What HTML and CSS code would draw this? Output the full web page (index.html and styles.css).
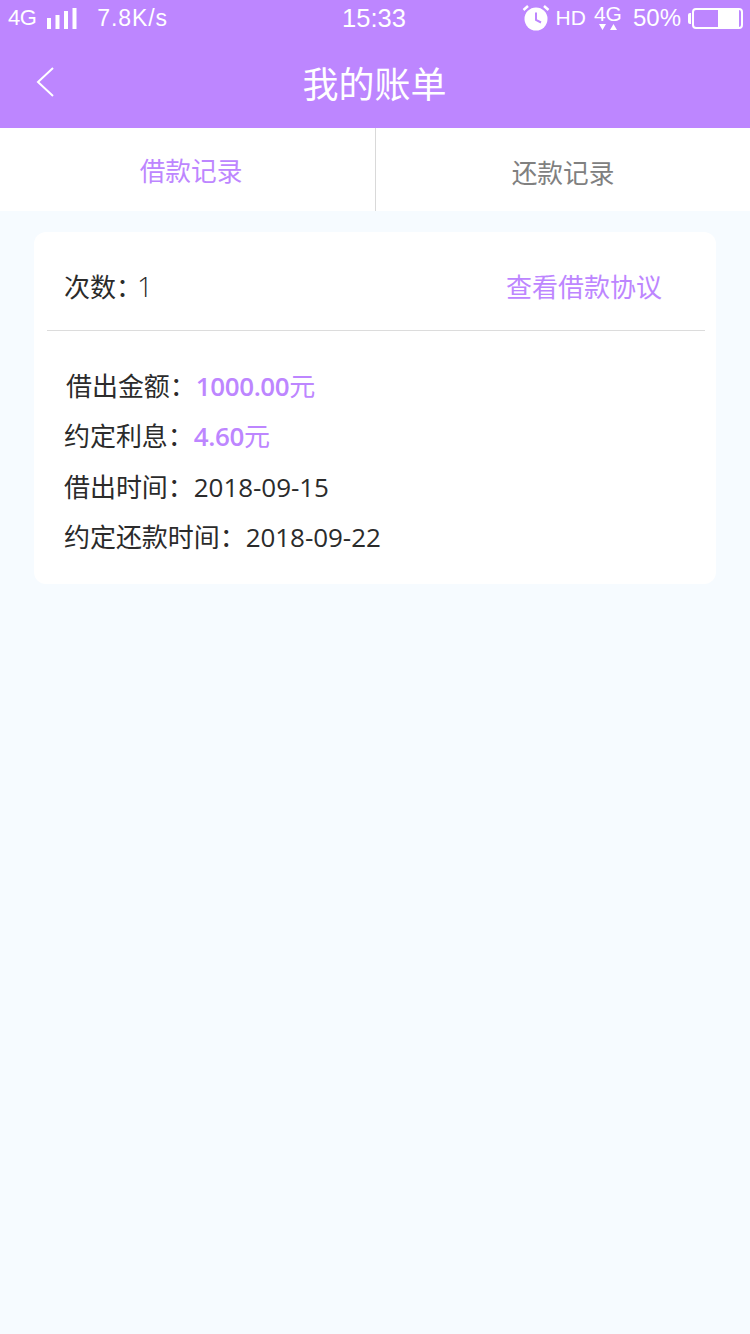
FILE: index.html
```html
<!DOCTYPE html>
<html lang="zh-CN">
<head>
  <meta charset="UTF-8" />
  <meta name="viewport" content="width=device-width, initial-scale=1.0"/>
  <title>我的账单</title>
  <link rel="stylesheet" href="styles.css">
</head>
<body>
  <div class="top">
    <div class="status-bar">
      <div class="status-left">
        <span class="net">4G</span>
        <svg class="signal" width="30" height="21" viewBox="0 0 30 21"><path fill="#fff" d="M0 10h4v11H0zM8.500 7h4v14h-4zM17 3h4v18h-4zM25.500 0h4v21h-4z"/></svg>
        <span class="speed">7.8K/s</span>
      </div>
      <span class="clock">15:33</span>
      <div class="status-right">
        <svg class="alarm" width="28" height="26" viewBox="0 0 28 26">
          <circle cx="14" cy="14" r="11.500" fill="#fff"/>
          <path d="M14 7.500V15l5 2.500" fill="none" stroke="#bd86ff" stroke-width="2"/>
          <path d="M1.500 5 6 1M26.500 5 22 1" fill="none" stroke="#fff" stroke-width="2.500"/>
        </svg>
        <span class="hd">HD</span>
        <div class="net-two">
          <span>4G</span>
          <svg width="18" height="7" viewBox="0 0 18 7"><path fill="#fff" d="M0 0h7L3.500 6zM11 6h7l-3.500-6z"/></svg>
        </div>
        <span class="percent">50%</span>
        <div class="battery"><div class="battery-level"></div></div>
      </div>
    </div>
    <div class="title-bar">
      <svg class="back" width="20" height="32" viewBox="0 0 20 32"><path d="M18 2 3 16l15 14" fill="none" stroke="#fff" stroke-width="2"/></svg>
      <h1>我的账单</h1>
    </div>
  </div>

  <div class="tabs">
    <div class="tab tab-active">借款记录</div>
    <div class="tab tab-other">还款记录</div>
  </div>

  <div class="card">
    <div class="card-head">
      <span class="count">次数<span class="colon">：</span><span class="count-num">1</span></span>
      <a class="agreement">查看借款协议</a>
    </div>
    <div class="card-body">
      <p class="row row-first">借出金额：<span class="hl"><span class="amount">1000.00</span>元</span></p>
      <p class="row">约定利息：<span class="hl"><span class="amount">4.60</span>元</span></p>
      <p class="row">借出时间：2018-09-15</p>
      <p class="row">约定还款时间：2018-09-22</p>
    </div>
  </div>
</body>
</html>
```

FILE: styles.css
```css
* {
  box-sizing: border-box;
}

:root {
  --purple: #bd86ff;
  --text: #2b2b2b;
}

body {
  margin: 0;
  min-height: 1334px;
  background-color: #f6fbff;
  font-family: "Open Sans", "Noto Sans CJK SC", sans-serif;
  color: var(--text);
}

.top {
  height: 128px;
  background-color: var(--purple);
  color: #fff;
}

.status-bar {
  height: 36px;
  padding: 0 7px 0 8px;
  display: grid;
  grid-template-columns: 1fr auto 1fr;
  align-items: center;
  font-family: "Liberation Sans", sans-serif;
  font-size: 21px;
}

.status-left,
.status-right {
  display: flex;
  align-items: center;
}

.status-right {
  justify-content: flex-end;
}

.net {
  font-size: 22px;
  letter-spacing: -0.5px;
}

.signal {
  margin-left: 11px;
}

.speed {
  margin-left: 20px;
  font-size: 23px;
  letter-spacing: 0.9px;
}

.clock {
  padding-right: 3px;
  font-size: 25.500px;
}

.alarm {
  margin-top: -1px;
}

.hd {
  margin-left: 6px;
}

.net-two {
  margin-left: 8px;
  display: flex;
  flex-direction: column;
  align-items: center;
  line-height: 21px;
  height: 30px;
}

.net-two svg {
  display: block;
}

.percent {
  margin-left: 11px;
  font-size: 24px;
}

.battery {
  width: 51px;
  height: 21px;
  margin-left: 11px;
  padding-right: 2px;
  border: 2px solid #fff;
  border-radius: 4px;
  display: flex;
  justify-content: flex-end;
  position: relative;
}

.battery::before {
  content: "";
  position: absolute;
  left: -6px;
  top: 3px;
  width: 3px;
  height: 11px;
  background: #fff;
  border-radius: 2px 0 0 2px;
}

.battery-level {
  width: 21px;
  background: #fff;
}

.title-bar {
  height: 92px;
  padding-left: 35px;
  display: flex;
  align-items: center;
  position: relative;
}

.title-bar h1 {
  position: absolute;
  left: 0;
  right: 1px;
  margin: 0;
  text-align: center;
  font-size: 36px;
  font-weight: 400;
}

.tabs {
  height: 83px;
  background: #fff;
  display: flex;
}

.tab {
  flex: 0 0 50%;
  display: flex;
  align-items: center;
  justify-content: center;
  font-size: 25.700px;
}

.tab-active {
  color: var(--purple);
  padding-left: 7px;
}

.tab-other {
  color: #808080;
  padding-top: 5px;
  border-left: 1px solid #d9d9d9;
}

.card {
  margin: 21px 34px 0;
  height: 352px;
  background: #fff;
  border-radius: 12px;
}

.card-head {
  height: 99px;
  margin: 0 11px 0 13px;
  padding: 10px 43px 0 17px;
  border-bottom: 1px solid #dcdcdc;
  display: flex;
  align-items: center;
  justify-content: space-between;
  font-size: 26px;
}

.colon {
  letter-spacing: -5px;
}

.count-num {
  font-size: 28px;
  font-weight: 300;
}

.agreement {
  color: var(--purple);
}

.card-body {
  padding: 30px 0 0 30px;
}

.row {
  margin: 0;
  height: 50.330px;
  line-height: 50px;
  font-size: 26px;
  white-space: nowrap;
  letter-spacing: -0.05px;
}

.row-first {
  padding-left: 2px;
}

.hl {
  color: var(--purple);
}

.amount {
  font-weight: 600;
  letter-spacing: -0.4px;
}
```
